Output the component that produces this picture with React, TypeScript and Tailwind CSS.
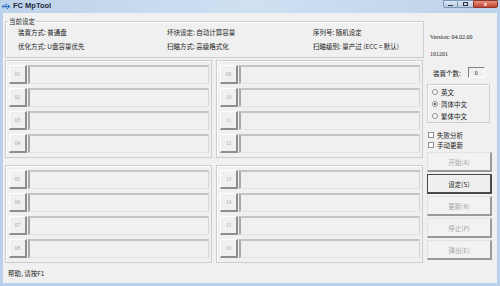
const cjk = { fontFamily: '"Noto Sans CJK SC", "Noto Sans", sans-serif' };
const serif = { fontFamily: '"Liberation Serif", "DejaVu Serif", serif' };

const PortRow = ({ n }: { n: string }) => (
  <div className="flex h-[19px] gap-[1px]">
    <div
      className="w-[18px] h-full flex items-center justify-center bg-[#f0f0f0] border-t border-l border-t-white border-l-white border-r-2 border-b-2 border-r-[#8e8e8e] border-b-[#8e8e8e] text-[5.5px] text-[#a8a8a8]"
      style={serif}
    >
      {n}
    </div>
    <div className="flex-1 h-full bg-[#f0f0f0] border-t-2 border-l-2 border-t-[#c4c4c4] border-l-[#a8a8a8] border-r border-b border-r-[#d4d4d4] border-b-[#e4e4e4]" />
  </div>
);

const PortGroup = ({ ports }: { ports: string[] }) => (
  <div className="h-[98px] border border-[#cdcdcd] shadow-[inset_1px_1px_0_#ffffff] pt-[4px] pl-[3px] pr-[2px] flex flex-col gap-[4px]">
    {ports.map((p) => (
      <PortRow key={p} n={p} />
    ))}
  </div>
);

const Radio = ({ label, checked }: { label: string; checked?: boolean }) => (
  <div className="h-[12px] flex items-center gap-[3px] pl-[4px]">
    <span className="w-[6px] h-[6px] rounded-full border border-[#8f8f8f] bg-white flex items-center justify-center">
      {checked && <span className="w-[2px] h-[2px] rounded-full bg-[#222]" />}
    </span>
    <span>{label}</span>
  </div>
);

const Check = ({ label }: { label: string }) => (
  <div className="h-[10px] flex items-center gap-[3px] pl-[1px]">
    <span className="w-[6px] h-[6px] border border-[#8f8f8f] bg-white" />
    <span>{label}</span>
  </div>
);

const Btn = ({ label, active }: { label: string; active?: boolean }) => (
  <div
    className={
      active
        ? 'h-[20px] w-[65px] flex items-center justify-center bg-[#efefef] border border-[#4a4a4a] border-b-2 border-r-2 text-[#1a1a1a]'
        : 'h-[20px] w-[65px] flex items-center justify-center bg-[#f2f2f2] border border-[#e2e2e2] border-b-2 border-r-2 border-b-[#9a9a9a] border-r-[#9a9a9a] text-[#a6a6a6]'
    }
  >
    {label}
  </div>
);

export default function App() {
  return (
    <div className="w-[500px] h-[286px] flex flex-col bg-[#b9d1ea] overflow-hidden text-[6.5px] leading-[10px] text-[#1a1a1a]" style={cjk}>
      {/* title bar */}
      <div className="h-[13px] flex items-start bg-gradient-to-r from-[#bdd3ea] via-[#cfe0f2] to-[#bdd3ea]">
        <div className="flex items-center h-[12px] pl-[2px] gap-[2px]">
          <svg width="9" height="7" viewBox="0 0 9 7">
            <path d="M0 3.5h7" stroke="#2f6fc6" strokeWidth="1.2" />
            <path d="M6 1.5l2.5 2-2.5 2z" fill="#2f6fc6" />
            <path d="M2 3.5L4 1.2h1.5M3.5 3.5L5 5.5h1" stroke="#2f6fc6" strokeWidth="0.9" fill="none" />
            <circle cx="1" cy="3.5" r="1" fill="#2f6fc6" />
          </svg>
          <span className="text-[7.5px] font-bold text-[#1c2a3a]" style={{ fontFamily: '"Liberation Sans", Arial, sans-serif' }}>
            FC MpTool
          </span>
        </div>
        <div className="ml-auto mr-[2px] flex h-[8px]">
          <div className="w-[15px] h-full rounded-bl-[2px] bg-gradient-to-b from-[#dce8f5] to-[#b4c9e0] border border-[#7b94b3] flex items-end justify-center pb-[1px]">
            <span className="w-[5px] h-[1px] bg-[#334]" />
          </div>
          <div className="w-[15px] h-full bg-gradient-to-b from-[#dce8f5] to-[#b4c9e0] border-y border-[#7b94b3] flex items-center justify-center">
            <span className="w-[5px] h-[4px] border border-[#334]" />
          </div>
          <div className="w-[25px] h-full rounded-br-[2px] bg-gradient-to-b from-[#e4917f] to-[#c3412c] border border-[#8b3a2e] flex items-center justify-center text-white text-[6px] leading-none font-bold" style={{ fontFamily: '"Liberation Sans", sans-serif' }}>
            x
          </div>
        </div>
      </div>

      {/* body */}
      <div className="flex-1 mx-[3px] mb-[3px] bg-[#f0f0f0] flex flex-col">
        <div className="flex flex-1">
          <div className="w-[421px] pl-[2px] pt-[2px]">
            <fieldset className="w-[419px] border border-[#cdcdcd] shadow-[inset_1px_1px_0_#ffffff] pl-[12px] pt-[2px] pb-[6px] mt-[2px]">
              <legend className="ml-[-10px] px-[1px] leading-[8px]">当前设定</legend>
              <div className="grid grid-cols-[149px_146px_1fr] gap-y-[4px]">
                <span>装置方式: 普通盘</span>
                <span>坏块设定: 自动计算容量</span>
                <span>序列号: 随机设定</span>
                <span>优化方式: U盘容量优先</span>
                <span>扫瞄方式: 高级格式化</span>
                <span>扫瞄级别: 量产过 (ECC = 默认)</span>
              </div>
            </fieldset>
            <div className="grid grid-cols-[207px_207px] gap-x-[4px] gap-y-[7px] mt-[2px]">
              <PortGroup ports={['01', '02', '03', '04']} />
              <PortGroup ports={['09', '10', '11', '12']} />
              <PortGroup ports={['05', '06', '07', '08']} />
              <PortGroup ports={['13', '14', '15', '16']} />
            </div>
          </div>

          <div className="flex-1 pl-[3px] flex flex-col">
            <div className="mt-[19px] pl-[3px] text-[6px]" style={serif}>Version: 04.02.00</div>
            <div className="mt-[7px] pl-[3px] text-[6px]" style={serif}>101201</div>
            <div className="mt-[8px] h-[11px] flex items-center pl-[6px]">
              <span>装置个数:</span>
              <div className="ml-[7px] w-[17px] h-[11px] bg-[#f0f0f0] border-t border-l border-[#808080] border-r border-b border-r-white border-b-white flex items-center justify-center text-[6px]" style={serif}>
                0
              </div>
            </div>
            <div className="mt-[6px] w-[63px] h-[39px] border border-[#cdcdcd] shadow-[inset_1px_1px_0_#ffffff] pt-[1px]">
              <Radio label="英文" />
              <Radio label="简体中文" checked />
              <Radio label="繁体中文" />
            </div>
            <div className="mt-[7px]">
              <Check label="失败分析" />
              <Check label="手动更新" />
            </div>
            <div className="mt-[2px] flex flex-col gap-[2px]">
              <Btn label="开始(A)" />
              <Btn label="设定(S)" active />
              <Btn label="更新(R)" />
              <Btn label="停止(P)" />
              <Btn label="弹出(E)" />
            </div>
          </div>
        </div>
        <div className="h-[20px] flex items-center pl-[5px]">帮助, 请按F1</div>
      </div>
    </div>
  );
}
